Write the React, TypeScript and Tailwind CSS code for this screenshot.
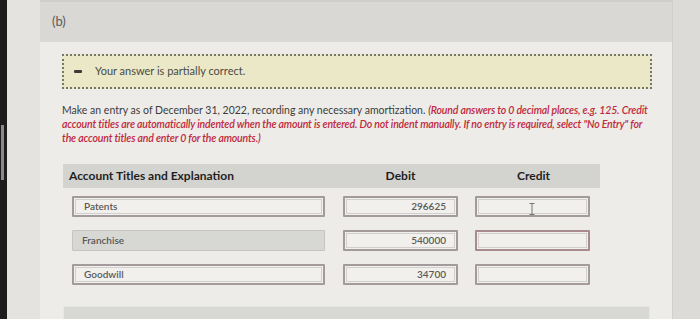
import React from "react";

const rows = [
  { title: "Patents", debit: "296625", credit: "", locked: false },
  { title: "Franchise", debit: "540000", credit: "", locked: true },
  { title: "Goodwill", debit: "34700", credit: "", locked: false },
];

function Field({
  value,
  align = "left",
  locked = false,
  flagged = false,
  width,
  cursor = false,
}: {
  value: string;
  align?: "left" | "right";
  locked?: boolean;
  flagged?: boolean;
  width: string;
  cursor?: boolean;
}) {
  if (locked) {
    return (
      <div
        className={`${width} h-[21px] flex items-center px-[9px] text-[10px] font-semibold text-[#585856] bg-[#d7d7d3] border border-[#c4c4c0] rounded-[1px]`}
      >
        {value}
      </div>
    );
  }
  return (
    <div
      className={`${width} h-[21px] p-[1px] rounded-[1px] border-2 ${
        flagged ? "border-[#a88a8f]" : "border-[#a39a9b]"
      } bg-[#f1f0ec] relative`}
    >
      <div
        className={`h-full flex items-center px-[8px] text-[10px] font-semibold text-[#5a5a58] border border-[#d2cfcf] ${
          align === "right" ? "justify-end" : ""
        }`}
      >
        {value}
      </div>
      {cursor && (
        <svg
          className="absolute left-[52px] top-[5px]"
          width="6"
          height="12"
          viewBox="0 0 6 12"
        >
          <path d="M0.5 0.5h5M3 0.5v11M0.5 11.5h5" stroke="#777" strokeWidth="1" fill="none" />
        </svg>
      )}
    </div>
  );
}

export default function App() {
  return (
    <div
      className="w-[700px] h-[319px] overflow-hidden flex bg-[#dfded9]"
      style={{ fontFamily: "Lato, 'Noto Sans', sans-serif" }}
    >
      {/* bezel */}
      <div className="w-[7px] shrink-0 bg-[#1c1c1c] flex flex-col">
        <div className="h-[125px]" />
        <div className="h-[55px] w-[3px] ml-[1px] bg-[#8a8a8a]" />
      </div>
      <div className="w-[33px] shrink-0 bg-[#e4e3df]" />

      {/* panel */}
      <div className="w-[632px] shrink-0 flex flex-col bg-[#edece8]">
        <div className="h-[42px] shrink-0 bg-[#d9d8d4] border-t-2 border-[#cfcecb] flex items-center pl-[12px] text-[13px] text-[#5b5b5b]">
          (b)
        </div>

        <div className="pl-[22px] pt-[12px] flex flex-col">
          <div className="w-[590px] h-[35px] bg-[#ebe8c8] border-2 border-dotted border-[#77766a] flex items-center pl-[10px]">
            <div className="w-[8px] h-[3px] bg-[#3b3b34] rounded-[1px]" />
            <span className="ml-[13px] text-[11px] text-[#4a4a45]">
              Your answer is partially correct.
            </span>
          </div>

          <p className="mt-[14px] text-[10.5px] leading-[14px] text-[#3c3c3c] whitespace-nowrap">
            Make an entry as of December 31, 2022, recording any necessary amortization.{" "}
            <span className="italic font-semibold text-[#c0283d] tracking-[-0.16px]">
              (Round answers to 0 decimal places, e.g. 125. Credit
              <br />
              account titles are automatically indented when the amount is entered. Do not indent
              manually. If no entry is required, select "No Entry" for
              <br />
              the account titles and enter 0 for the amounts.)
            </span>
          </p>

          <div className="mt-[19px] ml-[1px] w-[537px] h-[24px] bg-[#d3d3cf] flex items-center text-[12px] font-bold text-[#1f1f1f]">
            <div className="w-[271px] pl-[6px]">Account Titles and Explanation</div>
            <div className="w-[133px] text-center">Debit</div>
            <div className="w-[133px] text-center">Credit</div>
          </div>

          <div className="flex flex-col gap-[13px] mt-[8px] ml-[10px]">
            {rows.map((r, i) => (
              <div key={r.title} className="flex items-center">
                <Field value={r.title} locked={r.locked} width="w-[253px]" />
                <div className="ml-[18px]">
                  <Field value={r.debit} align="right" width="w-[115px]" />
                </div>
                <div className="ml-[17px]">
                  <Field
                    value={r.credit}
                    width="w-[115px]"
                    flagged={i === 1}
                    cursor={i === 0}
                  />
                </div>
              </div>
            ))}
          </div>

          <div className="mt-[21px] ml-[1px] w-[587px] h-[20px] bg-[#d8d8d4] border border-[#e6e6e2]" />
        </div>
      </div>

      <div className="flex-1 bg-[#dcdbd7] border-l border-[#d0cfcb]" />
    </div>
  );
}
